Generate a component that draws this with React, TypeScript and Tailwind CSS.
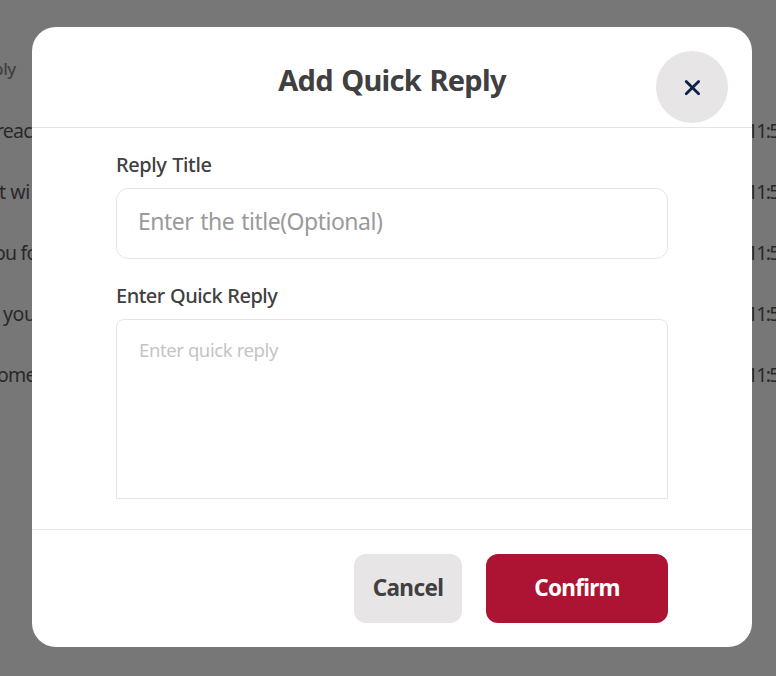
import React, { useState } from 'react';

interface ReplyRow {
  id: number;
  text: string;
  textClass: string;
  time: string;
}

// Rows of the table that stays visible behind the dialog
const ROWS: ReplyRow[] = [
  { id: 1, text: 'reac', textClass: '-ml-[4px] tracking-[-0.8px]', time: '11:5' },
  { id: 2, text: 't wi', textClass: '-ml-[1px] tracking-[-0.4px]', time: '11:5' },
  { id: 3, text: 'ou fo', textClass: '-ml-[6px] tracking-[-0.8px]', time: '11:5' },
  { id: 4, text: 'you', textClass: 'ml-[3px] tracking-[-0.4px]', time: '11:5' },
  { id: 5, text: 'ome', textClass: '-ml-[3px] tracking-[-0.8px]', time: '11:5' },
];

const ReplyTable: React.FC = () => (
  <div className="h-full overflow-hidden pt-[55px] text-[#292929]">
    <div className="-ml-[7px] h-[45px] text-[17px] leading-[28px] font-medium tracking-[-0.4px] text-[#404040]">ply</div>
    {ROWS.map((row) => (
      <div key={row.id} className="flex h-[61px] justify-between text-[19.5px] leading-[61px] whitespace-nowrap">
        <span className={row.textClass}>{row.text}</span>
        <span className="w-[29px] tracking-[-1.8px]">{row.time}</span>
      </div>
    ))}
  </div>
);

const CloseIcon: React.FC = () => (
  <svg width="18" height="18" viewBox="0 0 18 18" fill="none" stroke="#0f2147" strokeWidth="2.8" strokeLinecap="round">
    <path d="M3.2 3.4L15.6 15.8M15.6 3.4L3.2 15.8" />
  </svg>
);

const QuickReplyDialog: React.FC = () => {
  const [title, setTitle] = useState('');
  const [reply, setReply] = useState('');

  return (
    <section
      role="dialog"
      aria-labelledby="dialog-title"
      className="flex h-[620px] w-[720px] flex-col overflow-hidden rounded-3xl bg-white text-[#404041]"
    >
      <header className="relative h-[101px] shrink-0 border-b border-[#e5e5e5] pt-[31px] text-center">
        <h1 id="dialog-title" className="text-[29px] leading-[44px] font-bold tracking-[-0.7px] [word-spacing:1.5px]">
          Add Quick Reply
        </h1>
        <button
          type="button"
          aria-label="Close"
          className="absolute top-6 right-6 flex h-[72px] w-[72px] items-center justify-center rounded-full bg-[#e7e5e6]"
        >
          <CloseIcon />
        </button>
      </header>

      <div className="flex flex-1 flex-col px-[84px] pt-[23px]">
        <label htmlFor="title" className="text-[20px] leading-[28px] font-medium tracking-[-0.4px] [word-spacing:1px]">
          Reply Title
        </label>
        <input
          id="title"
          value={title}
          onChange={(e) => setTitle(e.target.value)}
          placeholder="Enter the title(Optional)"
          className="mt-[9px] h-[71px] rounded-xl border border-[#e5e5e5] px-[21px] pb-[5px] text-[23px] tracking-[-0.5px] [word-spacing:1.5px] outline-none placeholder:text-[#9a9a9a]"
        />
        <label htmlFor="reply" className="mt-[23px] text-[20px] leading-[28px] font-medium tracking-[-0.5px] [word-spacing:0.5px]">
          Enter Quick Reply
        </label>
        <textarea
          id="reply"
          value={reply}
          onChange={(e) => setReply(e.target.value)}
          placeholder="Enter quick reply"
          className="mt-[9px] h-[180px] resize-none rounded-t-lg border border-[#e5e5e5] px-[22px] pt-[15px] text-[18.5px] leading-[29px] tracking-[-0.4px] outline-none placeholder:text-[#c4c4c4]"
        />
      </div>

      <footer className="flex h-[118px] shrink-0 justify-end gap-6 border-t border-[#e5e5e5] pt-6 pr-[84px] text-[22.5px] font-bold">
        <button type="button" className="h-[69px] w-[108px] rounded-xl bg-[#e7e5e6] pb-px tracking-[-0.6px]">
          Cancel
        </button>
        <button type="button" className="h-[69px] w-[182px] rounded-xl bg-[#ad1434] pb-px tracking-[-0.7px] text-white">
          Confirm
        </button>
      </footer>
    </section>
  );
};

export default function App() {
  return (
    <main className="relative h-screen w-screen overflow-hidden bg-[#777777] font-['Noto_Sans',sans-serif]">
      <ReplyTable />
      <div className="absolute inset-0 flex pt-[27px] pl-8">
        <QuickReplyDialog />
      </div>
    </main>
  );
}
